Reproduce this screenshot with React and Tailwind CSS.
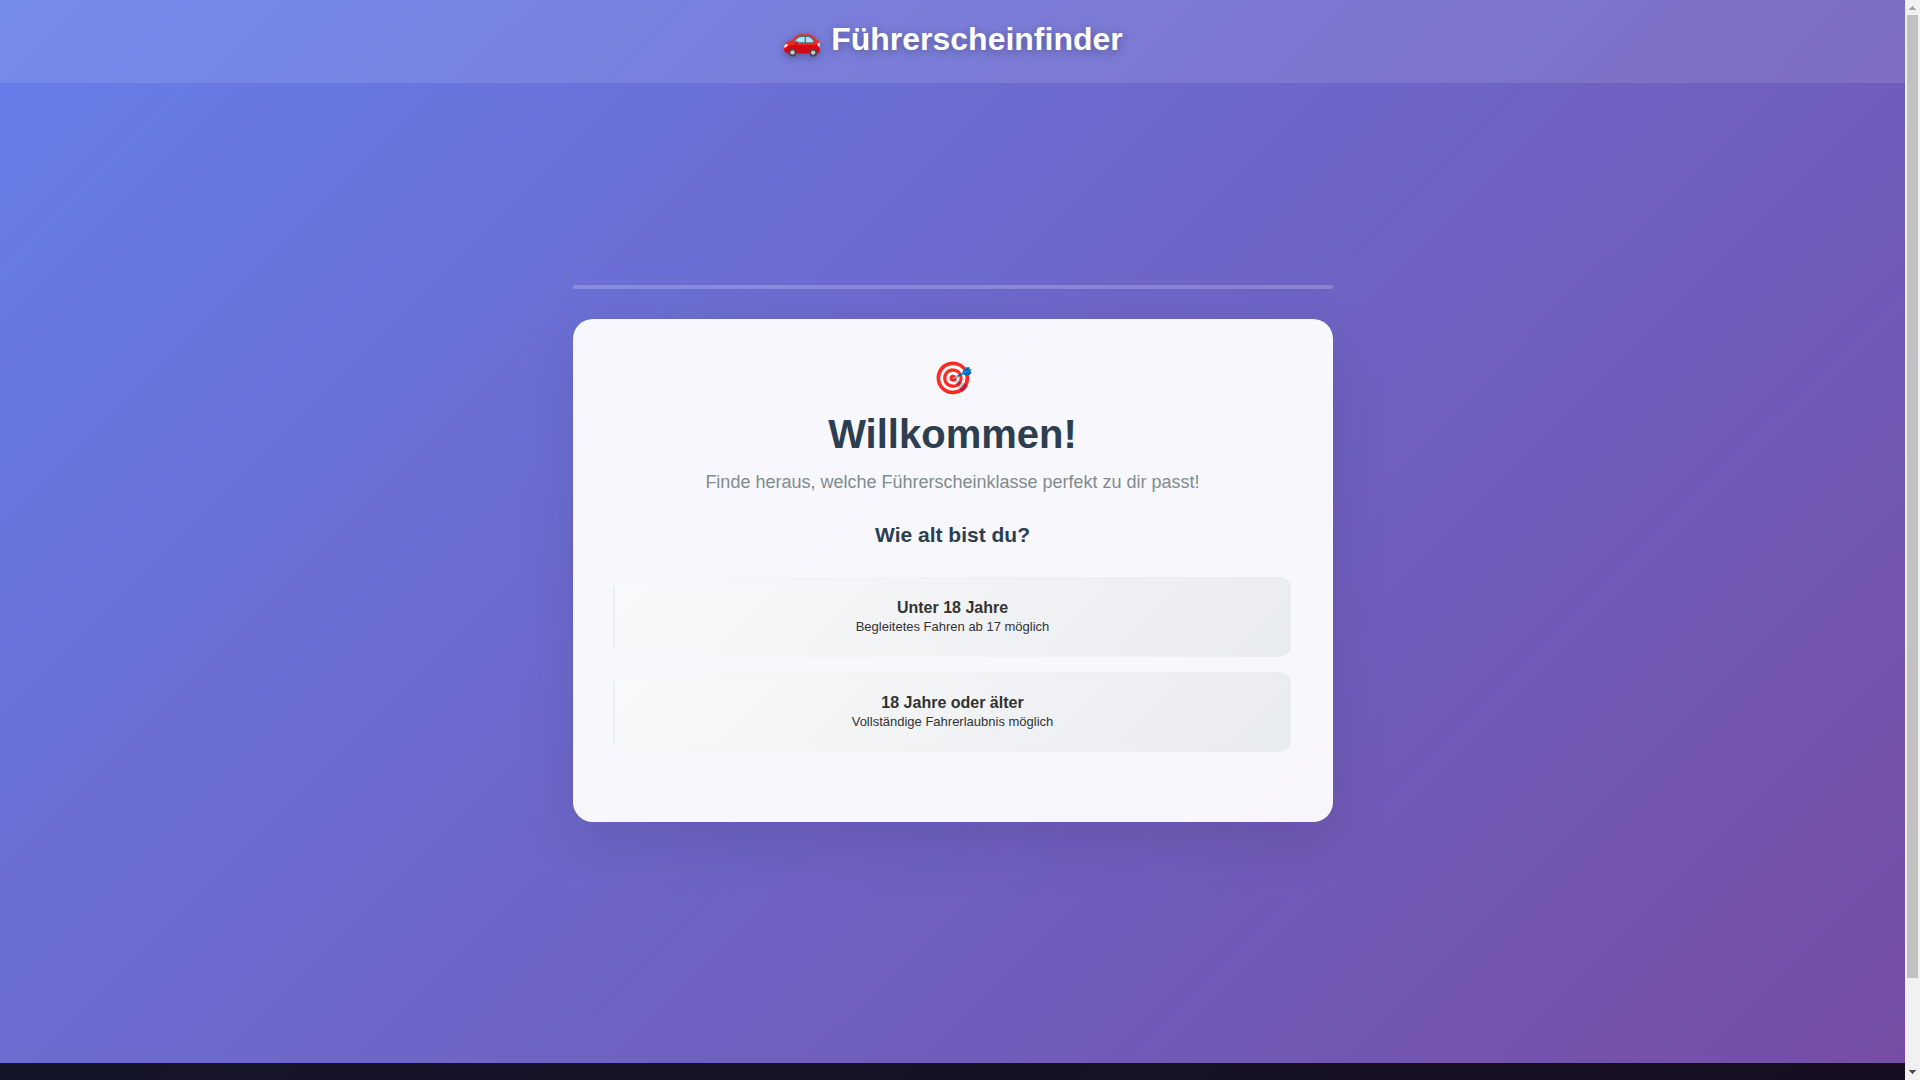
import React from 'react';

const options = [
  { value: 'under18', title: 'Unter 18 Jahre', hint: 'Begleitetes Fahren ab 17 möglich' },
  { value: 'over18', title: '18 Jahre oder älter', hint: 'Vollständige Fahrerlaubnis möglich' },
];

function Header() {
  return (
    <header className="h-[83px] pt-5 bg-white/10 text-center">
      <h1 className="text-[32px] leading-[38px] font-bold text-white [text-shadow:0_2px_10px_rgba(0,0,0,0.3)]">
        🚗 Führerscheinfinder
      </h1>
    </header>
  );
}

function OptionButton({ title, hint }) {
  return (
    <button
      type="button"
      className="block w-full px-5 py-[19px] border-2 border-transparent rounded-[15px] bg-linear-[135deg,#f8f9fa,#e9ecef] text-[#333333] text-center"
    >
      <strong className="block text-base leading-[20px] font-bold">{title}</strong>
      <span className="block text-[13px] leading-[18px]">{hint}</span>
    </button>
  );
}

function QuizCard() {
  return (
    <section className="p-10 pb-[70px] rounded-[20px] bg-white/95 shadow-[0_20px_60px_rgba(0,0,0,0.1)] text-center">
      <div className="mb-[14px] text-[32px] leading-[38px]">🎯</div>
      <h2 className="mb-[15px] text-[40px] leading-[46px] font-bold text-[#2c3e50]">Willkommen!</h2>
      <p className="mb-[30px] text-lg leading-[21px] text-[#7f8c8d]">
        Finde heraus, welche Führerscheinklasse perfekt zu dir passt!
      </p>
      <h3 className="mb-[30px] text-[21px] leading-[24px] font-bold text-[#2c3e50]">Wie alt bist du?</h3>
      <div className="flex flex-col gap-[15px]">
        {options.map((option) => (
          <OptionButton key={option.value} title={option.title} hint={option.hint} />
        ))}
      </div>
    </section>
  );
}

function ScrollRail() {
  return (
    <div className="w-[15px] shrink-0 flex flex-col items-center bg-[#f1f1f1]">
      <svg className="h-[15px] w-[15px] shrink-0" viewBox="0 0 15 15" shapeRendering="crispEdges">
        <path d="M7 6h1v1h1v1h1v1h1v1H4V9h1V8h1V7h1z" fill="#a3a3a3" />
      </svg>
      <div className="w-full flex-1 px-[2px]">
        <div className="h-11/12 bg-[#c1c1c1]" />
      </div>
      <svg className="h-[15px] w-[15px] shrink-0" viewBox="0 0 15 15" shapeRendering="crispEdges">
        <path d="M4 5h7v1h-1v1H9v1H8v1H7V8H6V7H5V6H4z" fill="#505050" />
      </svg>
    </div>
  );
}

export default function App() {
  return (
    <div className="flex h-screen overflow-hidden font-['Liberation_Sans',Arial,sans-serif]">
      <div className="flex-1 overflow-hidden">
        <div className="bg-linear-[135deg,#667eea,#764ba2]">
          <Header />
          <main className="min-h-[calc(100vh-100px)] flex flex-col items-center justify-center px-5 pb-[39px]">
            <div className="w-full max-w-[760px]">
              <div className="mb-[30px] h-1 rounded-xs bg-white/20" />
              <QuizCard />
            </div>
          </main>
          <footer className="h-28 bg-black/80" />
        </div>
      </div>
      <ScrollRail />
    </div>
  );
}
